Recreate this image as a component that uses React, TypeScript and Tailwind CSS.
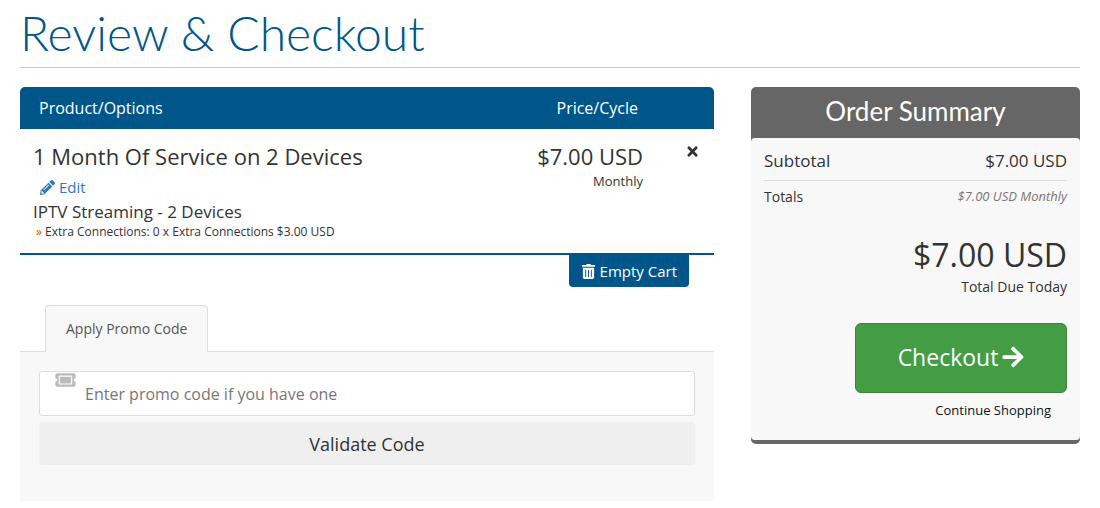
import React, { useState } from 'react';
import { FaArrowRight, FaPencilAlt, FaTicketAlt, FaTimes, FaTrashAlt } from 'react-icons/fa';

const items = [
  {
    name: '1 Month Of Service on 2 Devices',
    group: 'IPTV Streaming - 2 Devices',
    options: ['Extra Connections: 0 x Extra Connections $3.00 USD'],
    price: '$7.00 USD',
    cycle: 'Monthly',
  },
];

function CartTable() {
  return (
    <table className="w-full border-separate border-spacing-0">
      <thead>
        <tr className="h-[42px] bg-[#005689] text-base text-white">
          <th className="rounded-tl-[5px] pl-[19px] text-left font-normal">Product/Options</th>
          <th className="w-36 pr-[22px] text-right font-normal">Price/Cycle</th>
          <th className="w-[54px] rounded-tr-[5px]" aria-label="Remove" />
        </tr>
      </thead>
      <tbody>
        {items.map((item) => (
          <tr key={item.name} className="align-top">
            <td className="border-b-2 border-[#005689] pt-3 pb-3 pl-[13px]">
              <div className="text-[22px] leading-[30px]">{item.name}</div>
              <a href="#edit" className="ml-[7px] flex items-center gap-1 pt-0.5 text-[15px] leading-7 text-[#337ab7]">
                <FaPencilAlt className="h-[15px] w-[15px]" />
                Edit
              </a>
              <div className="text-[17px] leading-[22px]">{item.group}</div>
              {item.options.map((option) => (
                <div key={option} className="pl-[3px] text-xs leading-[18px]">
                  <span className="text-[#c50]">»</span> {option}
                </div>
              ))}
            </td>
            <td className="border-b-2 border-[#005689] pt-3 pr-[17px] text-right">
              <div className="text-[22px] leading-[30px] whitespace-nowrap">{item.price}</div>
              <div className="pt-0.5 text-[13px] leading-4">{item.cycle}</div>
            </td>
            <td className="border-b-2 border-[#005689] pt-3 pl-2.5 text-center">
              <button type="button" aria-label="Remove item" className="p-px">
                <FaTimes className="h-[15px] w-[15px]" />
              </button>
            </td>
          </tr>
        ))}
      </tbody>
    </table>
  );
}

function PromoCode() {
  const [code, setCode] = useState('');

  return (
    <section className="mt-[18px]">
      {/* Tabs */}
      <div role="tablist" className="flex border-b border-[#ddd] pl-[25px]">
        <button
          type="button"
          role="tab"
          aria-selected="true"
          className="-mb-px h-[47px] rounded-t border border-b-0 border-[#ddd] bg-[#f8f8f8] px-5 text-sm text-[#555]"
        >
          Apply Promo Code
        </button>
      </div>

      <form className="bg-[#f8f8f8] px-[19px] pt-[19px] pb-9" onSubmit={(e) => e.preventDefault()}>
        <div className="relative">
          <label htmlFor="promo" className="absolute top-0 left-4 text-[#bbb]">
            <FaTicketAlt className="h-[18px] w-[21px]" />
          </label>
          <input
            id="promo"
            type="text"
            aria-label="Promo code"
            value={code}
            onChange={(e) => setCode(e.target.value)}
            placeholder="Enter promo code if you have one"
            className="block h-[45px] w-full rounded-[3px] border border-[#ddd] bg-white pl-[45px] text-base placeholder:text-[#777]"
          />
        </div>
        <button type="submit" className="mt-1.5 block h-[43px] w-full rounded bg-[#efefef] text-lg">
          Validate Code
        </button>
      </form>
    </section>
  );
}

function OrderSummary() {
  return (
    <aside className="w-[329px] shrink-0 rounded-[5px] border-b-4 border-[#666] bg-[#666]">
      <h2 className="h-[51px] text-center font-['Lato',sans-serif] text-[26px] leading-[48px] text-white">
        Order Summary
      </h2>
      <div className="rounded bg-[#f8f8f8] px-[13px] pt-2.5 pb-5">
        <div className="flex justify-between border-b border-[#ddd] pb-1.5 text-[17px] leading-[26px]">
          <span>Subtotal</span>
          <span>$7.00 USD</span>
        </div>
        <div className="flex justify-between pt-1.5 text-sm leading-5">
          <span>Totals</span>
          <span className="text-[13px] leading-[18px] text-[#777] italic">$7.00 USD Monthly</span>
        </div>
        <div className="mt-7 text-right">
          <div className="text-[32px] leading-10">$7.00 USD</div>
          <div className="text-sm leading-6">Total Due Today</div>
        </div>
        <div className="mt-6 flex flex-col items-end">
          <button
            type="button"
            className="flex h-[70px] w-[212px] items-center justify-center gap-1 rounded-md border border-[#398439] bg-[#449d44] pb-0.5 text-[23px] text-white"
          >
            Checkout
            <FaArrowRight className="h-6 w-[22px]" />
          </button>
          <a href="#shop" className="mt-[7px] mr-4 text-[13px] leading-5 text-[#111]">
            Continue Shopping
          </a>
        </div>
      </div>
    </aside>
  );
}

export default function App() {
  return (
    <main className="bg-white px-5 font-['Open_Sans',sans-serif] text-[#333]">
      <h1 className="mb-[19px] border-b border-[#ccc] pt-[3px] pb-[5px] font-['Lato',sans-serif] text-[48px] leading-[59px] font-light text-[#005689]">
        Review &amp; Checkout
      </h1>

      <div className="flex items-start gap-[37px]">
        <div className="min-w-0 flex-1">
          <CartTable />
          <div className="flex justify-end pr-[25px]">
            <button
              type="button"
              className="flex h-8 items-center gap-1 rounded-b bg-[#005689] px-3 text-[15px] text-white"
            >
              <FaTrashAlt className="h-[15px] w-[15px]" />
              Empty Cart
            </button>
          </div>
          <PromoCode />
        </div>
        <OrderSummary />
      </div>
    </main>
  );
}
